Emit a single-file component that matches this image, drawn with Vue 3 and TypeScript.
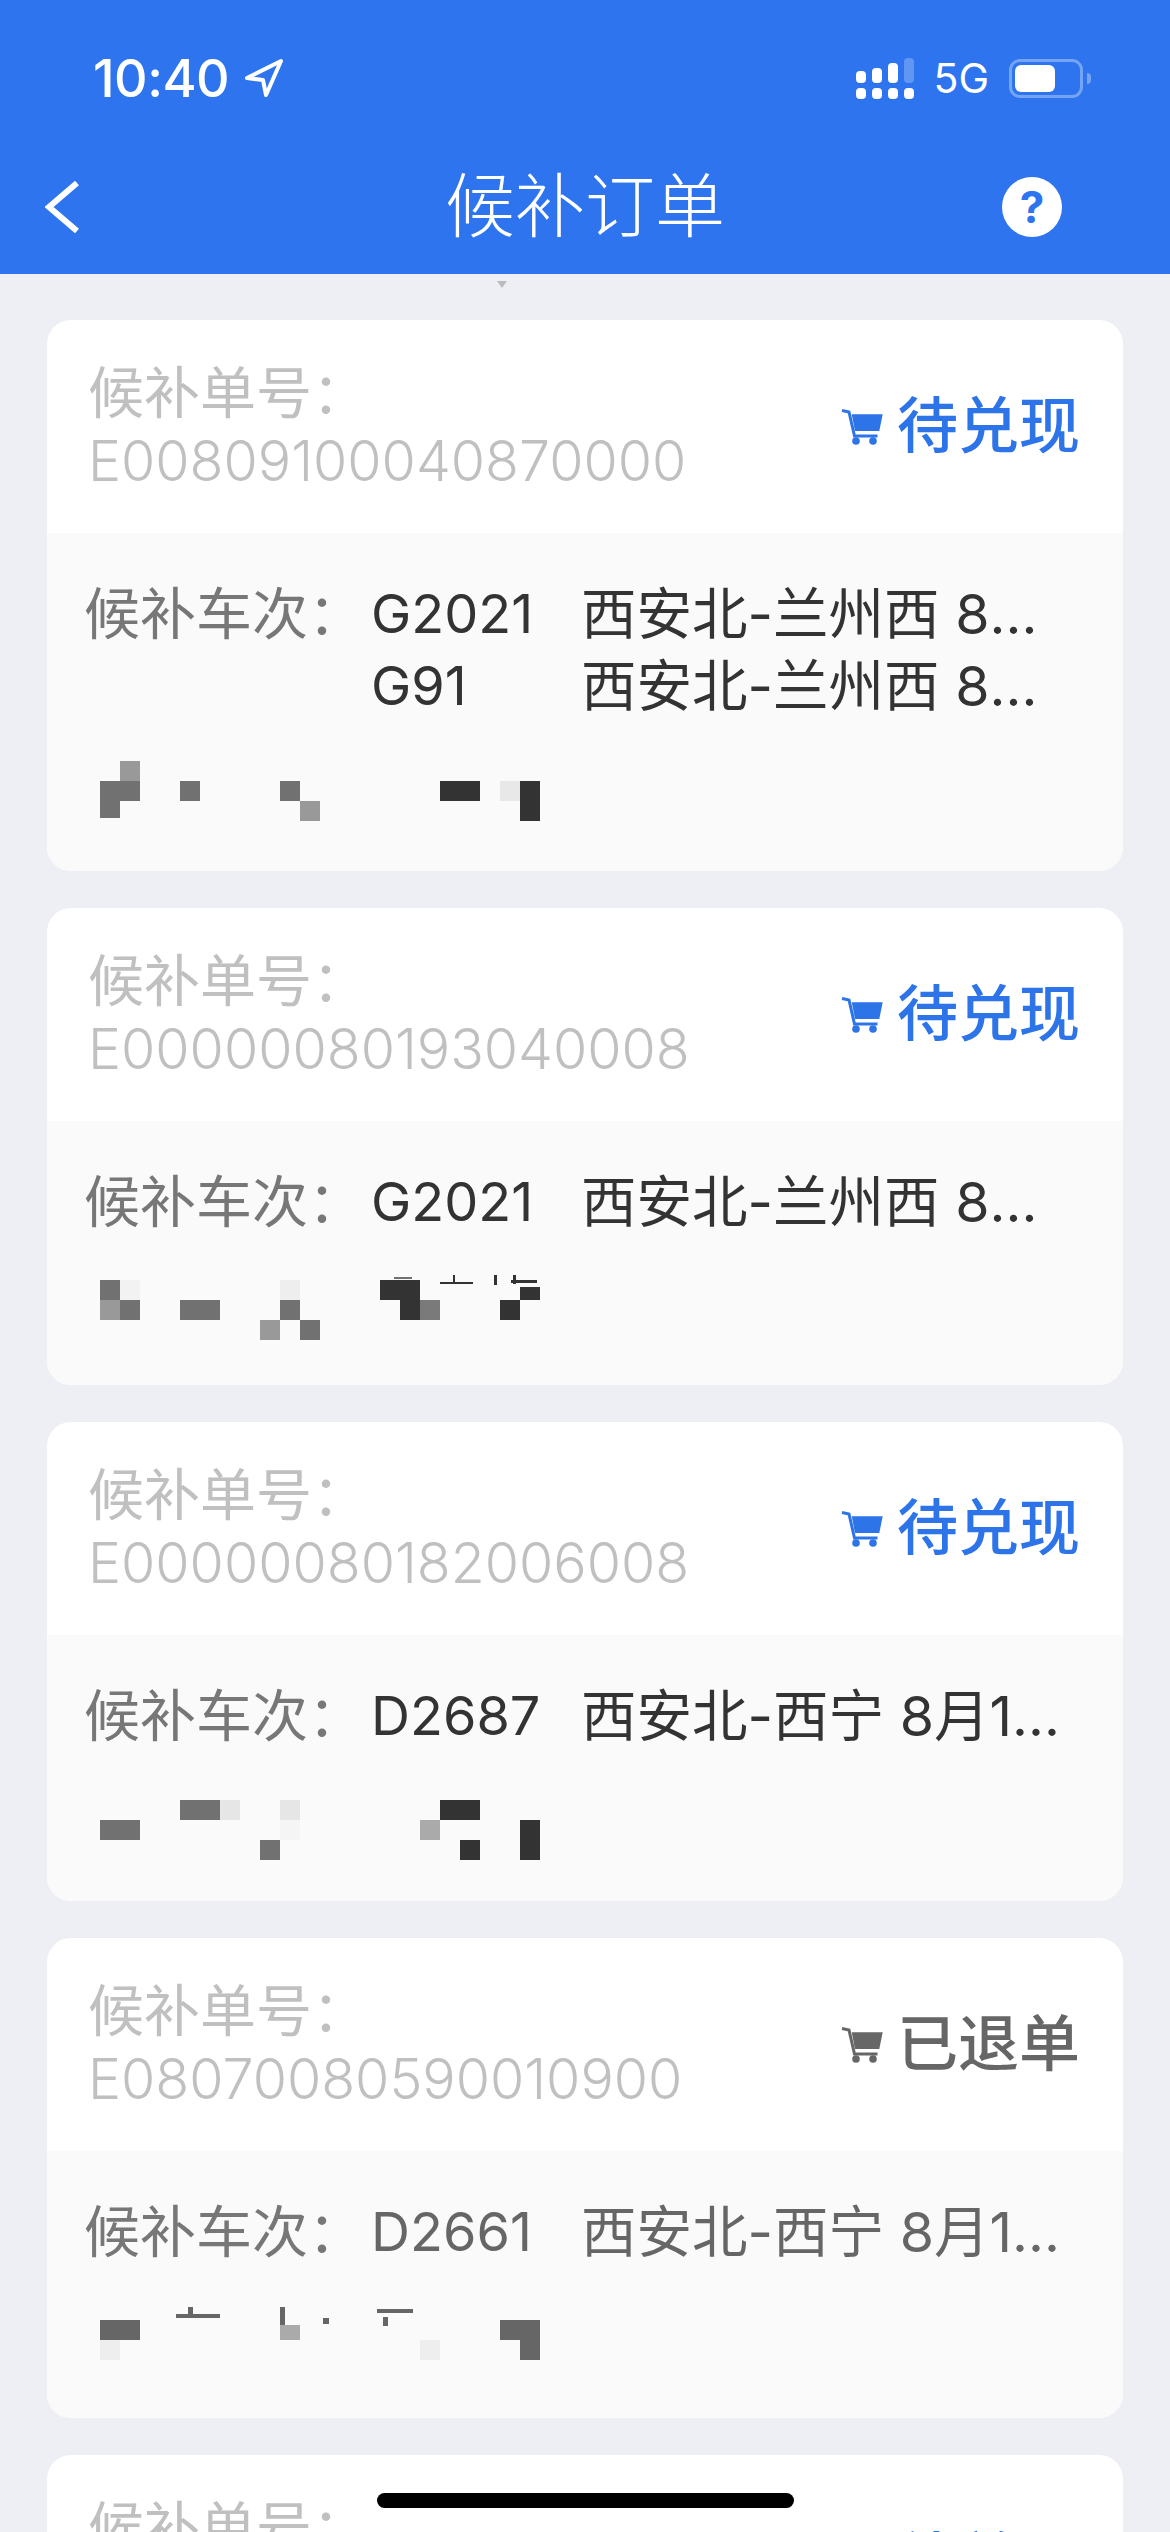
<script setup lang="ts">
interface Block {
  x: number
  y: number
  w?: number
  h?: number
  c: string
}

interface Train {
  code: string
  route: string
}

interface Order {
  no: string
  status: string
  refunded?: boolean
  trains: Train[]
  mosaicHeight: number
  blocks: Block[]
}

const DK = '#333333'
const MD = '#717171'
const LT = '#999999'

const orders: Order[] = [
  {
    no: 'E00809100040870000',
    status: '待兑现',
    trains: [
      { code: 'G2021', route: '西安北-兰州西 8月15日' },
      { code: 'G91', route: '西安北-兰州西 8月15日' }
    ],
    mosaicHeight: 149,
    blocks: [
      { x: 20, y: 39, c: LT },
      { x: 0, y: 59, w: 40, c: MD },
      { x: 0, y: 79, h: 17, c: MD },
      { x: 80, y: 59, c: MD },
      { x: 180, y: 59, c: MD },
      { x: 200, y: 79, c: LT },
      { x: 340, y: 59, w: 40, c: DK },
      { x: 400, y: 59, c: '#e8e8e8' },
      { x: 420, y: 59, h: 40, c: DK }
    ]
  },
  {
    no: 'E00000080193040008',
    status: '待兑现',
    trains: [{ code: 'G2021', route: '西安北-兰州西 8月15日' }],
    mosaicHeight: 147,
    blocks: [
      { x: 0, y: 42, c: MD },
      { x: 20, y: 42, c: '#f2f2f2' },
      { x: 0, y: 62, c: LT },
      { x: 20, y: 62, c: MD },
      { x: 80, y: 62, w: 40, c: MD },
      { x: 180, y: 42, c: '#eeeeee' },
      { x: 180, y: 62, c: MD },
      { x: 160, y: 82, c: LT },
      { x: 200, y: 82, c: MD },
      { x: 280, y: 42, w: 40, c: DK },
      { x: 300, y: 62, c: DK },
      { x: 320, y: 62, c: '#7a7a7a' },
      { x: 420, y: 49, h: 13, c: DK },
      { x: 400, y: 62, c: DK },
      { x: 294, y: 39, w: 18, h: 2, c: MD },
      { x: 340, y: 44, w: 33, h: 2, c: DK },
      { x: 353, y: 37, w: 2, h: 8, c: DK },
      { x: 394, y: 37, w: 3, h: 10, c: DK },
      { x: 411, y: 42, w: 26, h: 3, c: DK },
      { x: 413, y: 37, w: 3, h: 9, c: DK }
    ]
  },
  {
    no: 'E00000080182006008',
    status: '待兑现',
    trains: [{ code: 'D2687', route: '西安北-西宁 8月15日' }],
    mosaicHeight: 149,
    blocks: [
      { x: 0, y: 68, w: 40, c: MD },
      { x: 80, y: 48, w: 40, c: MD },
      { x: 120, y: 48, c: '#e6e6e6' },
      { x: 180, y: 48, c: '#e6e6e6' },
      { x: 180, y: 68, c: '#f5f5f5' },
      { x: 160, y: 88, c: MD },
      { x: 340, y: 48, w: 40, c: DK },
      { x: 320, y: 68, c: '#aaaaaa' },
      { x: 360, y: 88, c: DK },
      { x: 420, y: 68, h: 40, c: DK }
    ]
  },
  {
    no: 'E08070080590010900',
    status: '已退单',
    refunded: true,
    trains: [{ code: 'D2661', route: '西安北-西宁 8月15日' }],
    mosaicHeight: 150,
    blocks: [
      { x: 0, y: 52, w: 40, c: '#666666' },
      { x: 0, y: 72, c: '#eeeeee' },
      { x: 180, y: 57, h: 15, c: '#aaaaaa' },
      { x: 320, y: 72, c: '#eeeeee' },
      { x: 400, y: 52, w: 40, c: '#666666' },
      { x: 420, y: 72, c: '#666666' },
      { x: 76, y: 46, w: 44, h: 4, c: '#666666' },
      { x: 88, y: 39, w: 5, h: 8, c: '#666666' },
      { x: 180, y: 39, w: 5, h: 18, c: '#666666' },
      { x: 223, y: 50, w: 6, h: 6, c: '#666666' },
      { x: 277, y: 41, w: 36, h: 4, c: '#666666' },
      { x: 283, y: 49, w: 5, h: 9, c: '#666666' }
    ]
  },
  {
    no: '',
    status: '待兑现',
    trains: [],
    mosaicHeight: 100,
    blocks: []
  }
]
</script>

<template>
  <div class="phone">
    <header class="top">
      <div class="status-bar">
        <span class="time">10:40</span>
        <svg class="loc" width="40" height="40" viewBox="0 0 40 40">
          <path d="M37 3 3 20l16 2 3 15z" fill="none" stroke="#fff" stroke-width="4" stroke-linejoin="round" />
        </svg>
        <div class="status-right">
          <svg width="58" height="41" viewBox="0 0 58 41">
            <g fill="#fff">
              <rect x="0" y="30" width="10" height="11" rx="4" />
              <rect x="16" y="30" width="10" height="11" rx="4" />
              <rect x="32" y="30" width="10" height="11" rx="4" />
              <rect x="48" y="30" width="10" height="11" rx="4" />
              <rect x="0" y="13" width="10" height="12" rx="4" />
              <rect x="16" y="10" width="10" height="15" rx="4" />
              <rect x="32" y="5" width="10" height="20" rx="4" />
              <rect x="48" y="0" width="10" height="25" rx="4" opacity="0.25" />
            </g>
          </svg>
          <span class="net">5G</span>
          <div class="battery">
            <div class="battery-fill"></div>
          </div>
          <div class="battery-cap"></div>
        </div>
      </div>
      <div class="nav">
        <svg class="back" width="35" height="52" viewBox="0 0 35 52">
          <path d="M32 2 4 26l28 24" fill="none" stroke="#fff" stroke-width="6" />
        </svg>
        <div class="title">候补订单</div>
        <div class="help">?</div>
      </div>
    </header>

    <div class="content">
      <div class="pull-hint"><i></i></div>
      <div class="list">
        <section v-for="(order, i) in orders" :key="i" class="card">
          <div class="card-head">
            <div class="order-no">
              <div class="no-label">候补单号：</div>
              <div class="no-value">{{ order.no }}</div>
            </div>
            <div :class="['state', { 'state-off': order.refunded }]">
              <svg class="cart" width="42" height="38" viewBox="0 0 42 38">
                <path d="M1 2.500 8 4l5.500 24h23" fill="none" stroke="currentColor" stroke-width="3" />
                <path d="M10.700 6.300h31L38.300 23H14z" fill="currentColor" />
                <circle cx="15" cy="33" r="3.800" fill="currentColor" />
                <circle cx="32" cy="33" r="3.800" fill="currentColor" />
              </svg>
              <span>{{ order.status }}</span>
            </div>
          </div>
          <div :class="['card-body', { 'body-off': order.refunded }]">
            <div class="trains">
              <div class="trains-label">候补车次：</div>
              <div class="trains-list">
                <div v-for="t in order.trains" :key="t.code" class="train">
                  <span class="train-code">{{ t.code }}</span>
                  <span class="train-route">{{ t.route }}</span>
                </div>
              </div>
            </div>
            <svg class="mosaic" width="540" :height="order.mosaicHeight">
              <rect
                v-for="(b, j) in order.blocks"
                :key="j"
                :x="b.x"
                :y="b.y"
                :width="b.w ?? 20"
                :height="b.h ?? 20"
                :fill="b.c"
              />
            </svg>
          </div>
        </section>
      </div>
    </div>

    <div class="home-bar"></div>
  </div>
</template>

<style>
html,
body {
  margin: 0;
  background: #eeeff4;
}
</style>

<style scoped>
.phone {
  position: relative;
  width: 1170px;
  height: 2532px;
  overflow: hidden;
  background: #eeeff4;
  font-family: Inter, "Noto Sans CJK SC", sans-serif;
}

.top {
  height: 274px;
  background: #2d74ee;
  color: #fff;
}

.status-bar {
  height: 156px;
  display: flex;
  align-items: center;
  padding: 0 79px 0 93px;
}

.time {
  font-size: 52px;
  font-weight: 500;
  letter-spacing: -0.5px;
}

.loc {
  margin-left: 15px;
}

.status-right {
  margin-left: auto;
  display: flex;
  align-items: center;
}

.net {
  margin-left: 19px;
  font-size: 41px;
  font-weight: 400;
  line-height: 1;
}

.battery {
  margin-left: 20px;
  box-sizing: border-box;
  width: 74px;
  height: 39px;
  padding: 3px;
  border: 3px solid rgba(255, 255, 255, 0.35);
  border-radius: 11px;
}

.battery-fill {
  width: 40px;
  height: 27px;
  background: #fff;
  border-radius: 6px;
}

.battery-cap {
  margin-left: 4px;
  width: 4px;
  height: 11px;
  background: rgba(255, 255, 255, 0.35);
  border-radius: 0 4px 4px 0;
}

.nav {
  height: 102px;
  display: grid;
  grid-template-columns: 1fr auto 1fr;
  align-items: center;
  padding: 0 45px 16px;
}

.title {
  font-size: 70px;
  line-height: 1;
  font-weight: 300;
}

.help {
  justify-self: end;
  margin-right: 63px;
  width: 60px;
  height: 60px;
  border-radius: 50%;
  background: #fff;
  color: #2d74ee;
  font-size: 44px;
  font-weight: 700;
  line-height: 60px;
  text-align: center;
}

.pull-hint {
  height: 46px;
  display: flex;
  justify-content: center;
  padding-top: 7px;
  box-sizing: border-box;
}

.pull-hint i {
  width: 0;
  height: 0;
  margin-left: -166px;
  border-left: 5px solid transparent;
  border-right: 5px solid transparent;
  border-top: 7px solid #bbbbbb;
}

.list {
  display: flex;
  flex-direction: column;
  gap: 37px;
  padding: 0 47px;
}

.card {
  border-radius: 24px;
  overflow: hidden;
  background: #fff;
}

.card-head {
  height: 213px;
  display: flex;
  align-items: center;
  justify-content: space-between;
  padding: 0 43px 0 41px;
}

.no-label {
  font-size: 56px;
  line-height: 68px;
  color: #c0c0c0;
}

.no-value {
  min-height: 68px;
  font-size: 55.5px;
  line-height: 68px;
  color: #c0c0c0;
  font-weight: 300;
}

.state {
  display: flex;
  align-items: center;
  gap: 14px;
  color: #2d74e8;
  font-size: 61px;
  font-weight: 500;
  line-height: 1;
}

.state-off {
  color: #666666;
}

.cart {
  flex-shrink: 0;
}

.card-body {
  background: #fafafa;
  padding: 45px 0 0 37px;
  color: #333333;
}

.body-off {
  color: #666666;
}

.trains {
  display: flex;
}

.trains-label {
  width: 287px;
  flex-shrink: 0;
  font-size: 56px;
  line-height: 72px;
  color: #777777;
}

.train {
  display: flex;
  height: 72px;
  line-height: 72px;
}

.train-code {
  width: 210px;
  flex-shrink: 0;
  font-size: 54px;
}

.train-route {
  width: 495px;
  font-size: 55.5px;
  white-space: nowrap;
  overflow: hidden;
  text-overflow: ellipsis;
}

.mosaic {
  display: block;
  margin-left: 16px;
}

.home-bar {
  position: absolute;
  left: 377px;
  top: 2493px;
  width: 417px;
  height: 15px;
  border-radius: 8px;
  background: #000;
}
</style>
